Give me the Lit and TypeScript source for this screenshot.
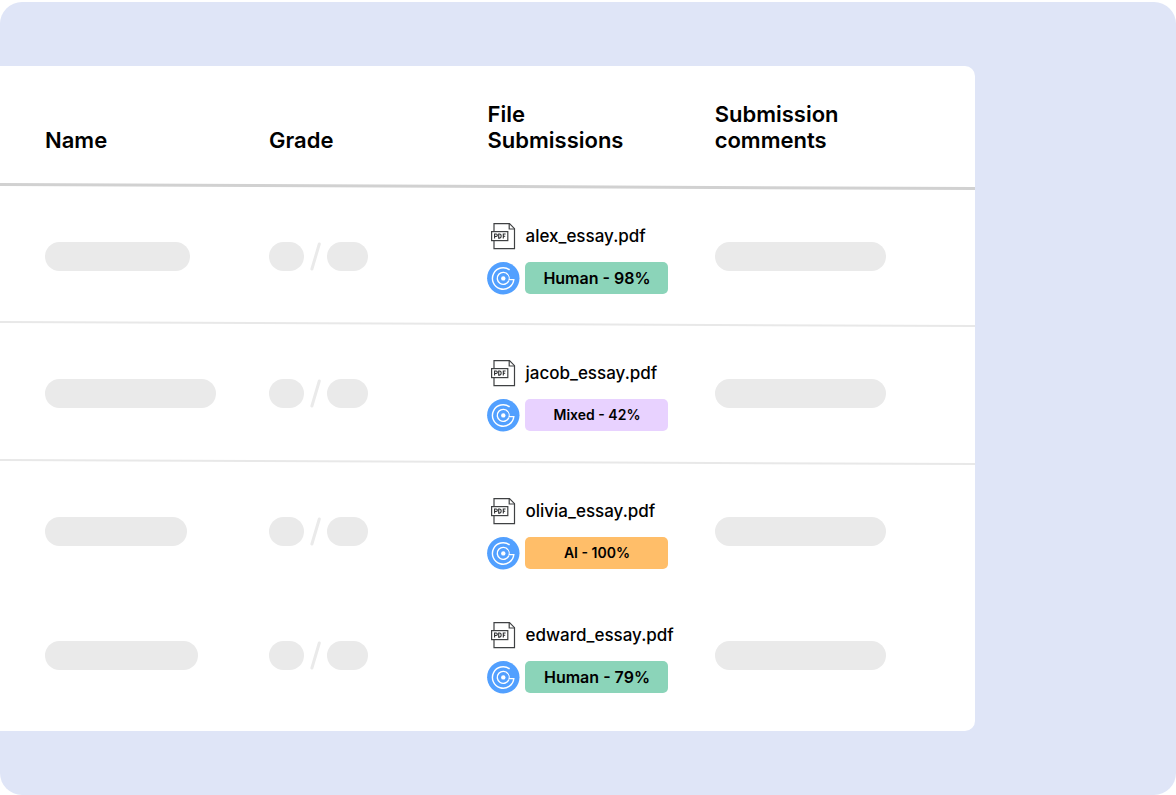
import { LitElement, html, css, svg } from "lit";
import { customElement } from "lit/decorators.js";
import { styleMap } from "lit/directives/style-map.js";
import { classMap } from "lit/directives/class-map.js";

type Verdict = "human" | "mixed" | "ai";

interface Submission {
  file: string;
  verdict: Verdict;
  label: string;
  large: boolean;
  nameWidth: number;
}

const SUBMISSIONS: Submission[] = [
  { file: "alex_essay.pdf", verdict: "human", label: "Human - 98%", large: true, nameWidth: 145 },
  { file: "jacob_essay.pdf", verdict: "mixed", label: "Mixed - 42%", large: false, nameWidth: 171 },
  { file: "olivia_essay.pdf", verdict: "ai", label: "AI - 100%", large: false, nameWidth: 142 },
  { file: "edward_essay.pdf", verdict: "human", label: "Human - 79%", large: true, nameWidth: 153 },
];

const pdfIcon = html`<svg class="pdf" viewBox="0 0 26 28" width="26" height="28" aria-hidden="true">
  ${svg`
    <path d="M4 9V1.7H19.5L24.5 6.7V26.7H4V19" fill="none" stroke="#3f4143" stroke-width="1.2"/>
    <path d="M19.2 1.7V7H24.5" fill="none" stroke="#3f4143" stroke-width="1.2"/>
    <rect x="1.6" y="9.6" width="16.2" height="9" fill="#fff" stroke="#3f4143" stroke-width="1.2"/>
    <path d="M4.6 16.5V12H6.1a1.2 1.2 0 0 1 0 2.5H4.6M8.7 12V16.1H9.6a1.5 1.5 0 0 0 1.5-1.5V13.5A1.5 1.5 0 0 0 9.6 12ZM13.3 16.5V12H15.6M13.3 14.2H15.2" fill="none" stroke="#2b2d2f" stroke-width="1.1"/>
  `}
</svg>`;

const scannerLogo = html`<svg viewBox="0 0 33 33" width="33" height="33" aria-hidden="true">
  ${svg`
    <circle cx="16.3" cy="16.3" r="16.2" fill="#52a0ff"/>
    <path d="M22.6 7.9A10.7 10.7 0 1 0 26.8 17.6H21.6" fill="none" stroke="#fff" stroke-width="1.4"/>
    <path d="M21.1 12.8A6 6 0 1 0 21.9 18.4" fill="none" stroke="#fff" stroke-width="1.4"/>
    <path d="M21.1 12.8A6 6 0 0 1 22.2 17.6" fill="none" stroke="#fff" stroke-width="1"/>
    <circle cx="16.3" cy="16.4" r="2.2" fill="#fff"/>
  `}
</svg>`;

@customElement("app-root")
export class AppRoot extends LitElement {
  static styles = css`
    :host {
      display: block;
      padding-top: 2px;
      box-sizing: border-box;
      min-height: 100vh;
      background: #fff;
      color: #000;
      font-family: Inter, "Liberation Sans", sans-serif;
    }
    .panel {
      box-sizing: border-box;
      min-height: calc(100vh - 2px);
      padding: 64px 0;
      border-radius: 22px;
      background: #dfe5f7;
      overflow: hidden;
    }
    .card {
      margin-right: 201px;
      border-radius: 0 10px 10px 0;
      background: #fff;
      overflow: hidden;
    }
    table {
      width: 100%;
      border-collapse: collapse;
      table-layout: fixed;
    }
    .col-name { width: 27.6%; }
    .col-grade { width: 22.4%; }
    .col-file { width: 23.3%; }
    tr {
      position: relative;
    }
    th {
      height: 52px;
      padding: 35px 0;
      vertical-align: bottom;
      text-align: left;
      font-size: 22px;
      line-height: 26px;
      font-weight: 600;
    }
    td {
      height: 72px;
      padding: 34px 0 31px;
      vertical-align: middle;
    }
    .second td { padding-bottom: 32px; }
    .tight td { padding-bottom: 18px; }
    .last td { padding-bottom: 38px; }
    th:first-child,
    td:first-child {
      padding-left: 45px;
    }
    .ruled::after {
      content: "";
      position: absolute;
      left: 0;
      right: 0;
      bottom: 0;
      height: 2px;
      background: #e8e8e8;
      transform: skewY(0.235deg);
    }
    .head::after {
      height: 3px;
      background: #d1d1d1;
    }
    .bone {
      display: block;
      height: 29px;
      margin-bottom: 4px;
      border-radius: 15px;
      background: #eaeaea;
    }
    .comment { width: 171px; }
    .grade {
      display: flex;
      align-items: flex-start;
      gap: 6px;
    }
    .score { width: 35px; }
    .total { width: 41px; }
    .file {
      display: grid;
      grid-template-columns: 33px 143px;
      grid-template-rows: 28px 32px;
      column-gap: 5px;
      row-gap: 12px;
      align-items: center;
    }
    .pdf { margin-left: 3px; }
    .file a {
      color: inherit;
      text-decoration: none;
      white-space: nowrap;
      font-size: 17px;
      line-height: 28px;
      font-weight: 500;
    }
    .badge {
      border-radius: 5px;
      text-align: center;
      font-size: 14px;
      line-height: 32px;
      font-weight: 600;
    }
    .large { font-size: 16px; }
    .human { background: #8bd4b9; }
    .mixed { background: #e8d2ff; }
    .ai { background: #ffbe69; }
    svg { display: block; }
  `;

  private renderRow(item: Submission, index: number) {
    const rowClasses = { ruled: index < 2, second: index === 1, tight: index === 2, last: index === 3 };
    return html`<tr class=${classMap(rowClasses)}>
      <td><span class="bone" style=${styleMap({ width: `${item.nameWidth}px` })}></span></td>
      <td>
        <div class="grade">
          <span class="bone score"></span>
          <svg width="11" height="29" viewBox="0 0 11 29" aria-hidden="true">
            <path d="M9.3 2L1.9 27" stroke="#eaeaea" stroke-width="3" stroke-linecap="round" />
          </svg>
          <span class="bone total"></span>
        </div>
      </td>
      <td>
        <div class="file">
          ${pdfIcon}
          <a href="#">${item.file}</a>
          ${scannerLogo}
          <span class=${classMap({ badge: true, large: item.large, [item.verdict]: true })}>${item.label}</span>
        </div>
      </td>
      <td><span class="bone comment"></span></td>
    </tr>`;
  }

  render() {
    return html`<main class="panel">
      <div class="card">
        <table>
          <colgroup>
            <col class="col-name" />
            <col class="col-grade" />
            <col class="col-file" />
            <col />
          </colgroup>
          <thead>
            <tr class="head ruled">
              <th scope="col">Name</th>
              <th scope="col">Grade</th>
              <th scope="col">File<br />Submissions</th>
              <th scope="col">Submission<br />comments</th>
            </tr>
          </thead>
          <tbody>
            ${SUBMISSIONS.map((item, index) => this.renderRow(item, index))}
          </tbody>
        </table>
      </div>
    </main>`;
  }
}
